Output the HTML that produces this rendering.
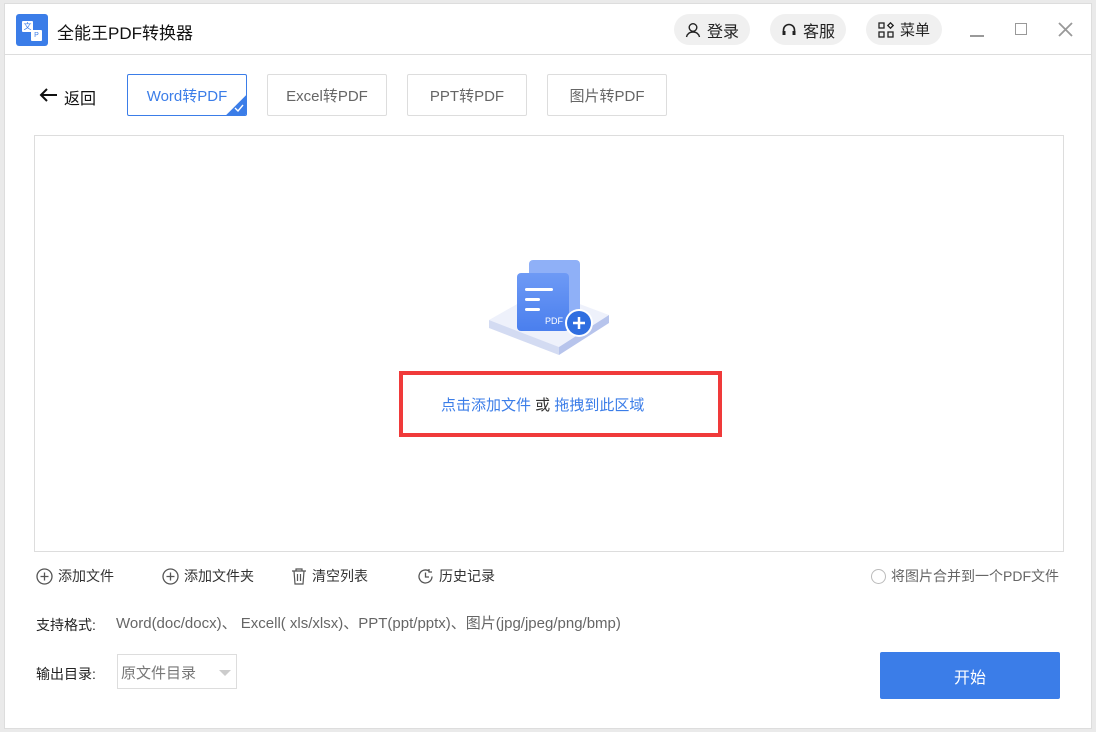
<!DOCTYPE html>
<html><head><meta charset="utf-8"><style>
*{margin:0;padding:0;box-sizing:border-box}
body{width:1096px;height:732px;background:#eaeaea;font-family:"Liberation Sans","Noto Sans CJK SC",sans-serif;position:relative;overflow:hidden}
.win{position:absolute;left:4px;top:3px;width:1088px;height:726px;background:#fff;border:1px solid #ddd}
.abs{position:absolute}
.pill{position:absolute;top:10px;height:31px;border-radius:16px;background:#f0f0f0;font-size:16px;color:#222;display:flex;align-items:center;justify-content:center;gap:6px}
.tab{position:absolute;top:70px;width:120px;height:42px;border:1px solid #ddd;border-radius:2px;font-size:15px;color:#666;display:flex;align-items:center;justify-content:center}
.tool{position:absolute;top:562px;font-size:14px;color:#333;display:flex;align-items:center;gap:5px}
</style></head><body>
<div class="win">
 <div class="abs" style="left:11px;top:10px;width:32px;height:32px;background:#3b7de8;border-radius:3px">
  <div class="abs" style="left:6px;top:7px;width:11px;height:11px;background:#fff;border-radius:1px;font-size:8px;color:#3b7de8;text-align:center;line-height:11px">文</div>
  <div class="abs" style="left:15px;top:16px;width:11px;height:11px;background:#fff;border-radius:1px;font-size:7px;color:#3b7de8;text-align:center;line-height:11px">P</div>
 </div>
 <div class="abs" style="left:52px;top:15px;font-size:17px;color:#111">全能王PDF转换器</div>
 <div class="pill" style="left:669px;width:76px"><svg width="16" height="16" viewBox="0 0 16 16"><circle cx="8" cy="5.5" r="3.8" fill="none" stroke="#222" stroke-width="1.4"/><path d="M1.5 15c1-4 4-5 6.5-5s5.5 1 6.5 5" fill="none" stroke="#222" stroke-width="1.4"/></svg>登录</div>
 <div class="pill" style="left:765px;width:76px"><svg width="16" height="16" viewBox="0 0 16 16"><path d="M2.5 11V8a5.5 5.5 0 0111 0v3" fill="none" stroke="#222" stroke-width="1.6"/><rect x="1.5" y="9" width="3" height="4" fill="#222"/><rect x="11.5" y="9" width="3" height="4" fill="#222"/></svg>客服</div>
 <div class="pill" style="left:861px;width:76px;font-size:15px"><svg width="16" height="16" viewBox="0 0 16 16" fill="none" stroke="#222" stroke-width="1.3"><rect x="1" y="1" width="5" height="5"/><rect x="1" y="10" width="5" height="5"/><rect x="10" y="10" width="5" height="5"/><path d="M12.5 0.8l2.7 2.7-2.7 2.7-2.7-2.7z"/></svg>菜单</div>
 <div class="abs" style="left:965px;top:31px;width:14px;height:1.5px;background:#999"></div>
 <div class="abs" style="left:1010px;top:19px;width:12px;height:12px;border:1.5px solid #999"></div>
 <svg class="abs" style="left:1053px;top:18px" width="15" height="15"><path d="M1 1l13 13M14 1L1 14" stroke="#999" stroke-width="1.8"/></svg>
 <div class="abs" style="left:0;top:50px;width:1086px;height:1px;background:#ddd"></div>

 <svg class="abs" style="left:33px;top:83px" width="20" height="16"><path d="M19 8H3M9 2L3 8l6 6" fill="none" stroke="#111" stroke-width="2"/></svg>
 <div class="abs" style="left:59px;top:81px;font-size:16px;color:#111">返回</div>
 <div class="tab" style="left:122px;border-color:#3b7de8;color:#3b7de8;overflow:hidden">Word转PDF
  <div class="abs" style="right:-14px;bottom:-14px;width:28px;height:28px;background:#3b7de8;transform:rotate(45deg)"></div>
  <svg class="abs" style="right:2px;bottom:3px" width="10" height="8"><path d="M1 4l3 3 5-6" fill="none" stroke="#fff" stroke-width="1.4"/></svg>
 </div>
 <div class="tab" style="left:262px">Excel转PDF</div>
 <div class="tab" style="left:402px">PPT转PDF</div>
 <div class="tab" style="left:542px">图片转PDF</div>

 <div class="abs" style="left:29px;top:131px;width:1030px;height:417px;border:1px solid #ddd"></div>
 <svg class="abs" style="left:482px;top:251px" width="125" height="110" viewBox="0 0 125 110">
  <defs><linearGradient id="g" x1="0" y1="0" x2="0" y2="1"><stop offset="0" stop-color="#6e9af5"/><stop offset="1" stop-color="#4a7fee"/></linearGradient></defs>
  <path d="M2 65 L55 35 L122 60 L72 92 Z" fill="#eef1fb"/>
  <path d="M2 65 L2 73 L72 100 L72 92Z" fill="#d3dbf2"/>
  <path d="M72 92 L122 60 L122 68 L72 100Z" fill="#b7c4ec"/>
  <rect x="42" y="5" width="51" height="62" rx="4" fill="#8fb0f7"/>
  <rect x="30" y="18" width="52" height="58" rx="4" fill="url(#g)"/>
  <rect x="38" y="33" width="28" height="3" rx="1.5" fill="#fff"/>
  <rect x="38" y="43" width="15" height="3" rx="1.5" fill="#fff"/>
  <rect x="38" y="53" width="15" height="3" rx="1.5" fill="#fff"/>
  <text x="58" y="69" font-size="9" fill="#fff" font-family="Liberation Sans">PDF</text>
  <circle cx="92" cy="68" r="14" fill="#fff"/><circle cx="92" cy="68" r="12" fill="#2f6ee0"/>
  <path d="M92 62v12M86 68h12" stroke="#fff" stroke-width="2.5"/>
 </svg>
 <div class="abs" style="left:394px;top:367px;width:323px;height:66px;border:4px solid #f03a3a"></div>
 <div class="abs" style="left:436px;top:390px;font-size:15px;color:#3b7de8">点击添加文件 <span style="color:#333">或</span> 拖拽到此区域</div>

 <div class="tool" style="left:31px"><svg width="17" height="17"><circle cx="8.5" cy="8.5" r="7.5" fill="none" stroke="#555" stroke-width="1.3"/><path d="M8.5 4.5v8M4.5 8.5h8" stroke="#555" stroke-width="1.3"/></svg>添加文件</div>
 <div class="tool" style="left:157px"><svg width="17" height="17"><circle cx="8.5" cy="8.5" r="7.5" fill="none" stroke="#555" stroke-width="1.3"/><path d="M8.5 4.5v8M4.5 8.5h8" stroke="#555" stroke-width="1.3"/></svg>添加文件夹</div>
 <div class="tool" style="left:286px"><svg width="16" height="17"><path d="M1 3h14M5 3V1h6v2M3 3l1 13h8l1-13M6.5 6v7M9.5 6v7" fill="none" stroke="#555" stroke-width="1.2"/></svg>清空列表</div>
 <div class="tool" style="left:412px"><svg width="17" height="17"><path d="M15 8.5A6.5 6.5 0 1 1 12 3M8.5 4.5v4.5h3.5M12 1v3h3" fill="none" stroke="#555" stroke-width="1.3"/></svg>历史记录</div>
 <div class="tool" style="left:866px;color:#666"><span style="width:15px;height:15px;border:1px solid #bbb;border-radius:50%;display:inline-block"></span>将图片合并到一个PDF文件</div>

 <div class="abs" style="left:31px;top:611px;font-size:14px;color:#222">支持格式:</div>
 <div class="abs" style="left:111px;top:608px;font-size:15px;color:#666">Word(doc/docx)、 Excell( xls/xlsx)、PPT(ppt/pptx)、图片(jpg/jpeg/png/bmp)</div>
 <div class="abs" style="left:31px;top:660px;font-size:14px;color:#222">输出目录:</div>
 <div class="abs" style="left:112px;top:650px;width:120px;height:35px;border:1px solid #ddd;font-size:15px;color:#777;padding:7px 0 0 3px">原文件目录
  <div class="abs" style="right:5px;top:15px;width:0;height:0;border-left:6px solid transparent;border-right:6px solid transparent;border-top:6px solid #ccc"></div></div>
 <div class="abs" style="left:875px;top:648px;width:180px;height:47px;background:#3b7de8;border-radius:2px;color:#fff;font-size:16px;display:flex;align-items:center;justify-content:center">开始</div>
</div>
</body></html>
